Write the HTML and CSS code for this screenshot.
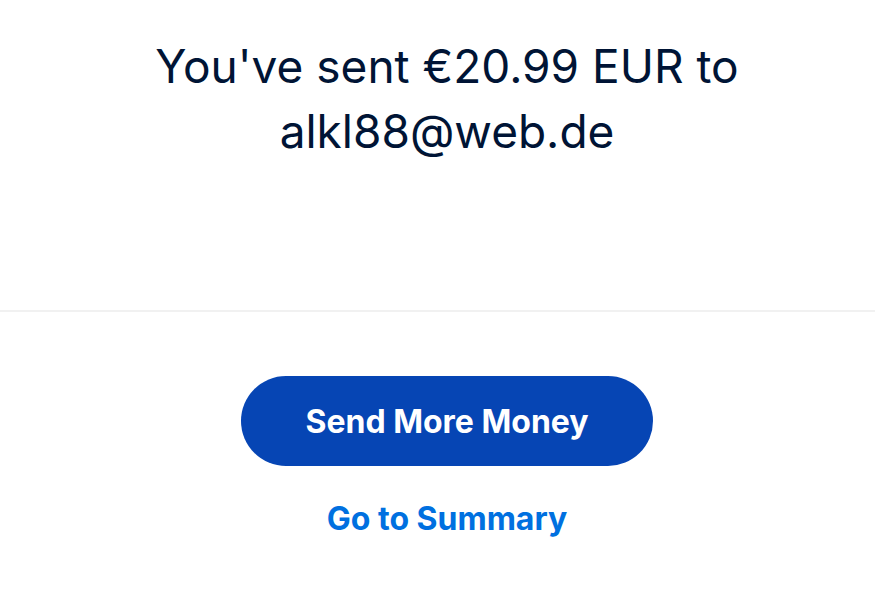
FILE: index.html
```html
<!DOCTYPE html>
<html>
<head>
<meta charset="utf-8">
<link rel="stylesheet" href="styles.css">
</head>
<body>
<main class="page">
  <section class="top">
    <h1 class="title">You've sent €20.99 EUR to alkl88@web.de</h1>
  </section>
  <section class="actions">
    <button class="primary">Send More Money</button>
    <a class="link" href="#">Go to Summary</a>
  </section>
</main>
</body>
</html>
```
FILE: styles.css
```css
html, body {
  margin: 0;
  padding: 0;
  background: #fff;
}
body {
  font-family: Inter, "Noto Sans", sans-serif;
  width: 875px;
  height: 589px;
  overflow: hidden;
}
.page {
  display: flex;
  flex-direction: column;
}
.top {
  height: 312px;
  border-bottom: 2px solid #f1f1f1;
  display: flex;
  justify-content: center;
  padding-top: 34px;
  padding-left: 19px;
  box-sizing: border-box;
}
.title {
  margin: 0;
  width: 640px;
  text-align: center;
  font-size: 46px;
  font-weight: 400;
  line-height: 65px;
  color: #001435;
}
.actions {
  display: flex;
  flex-direction: column;
  align-items: center;
  padding-top: 64px;
  padding-left: 19px;
}
.primary {
  width: 412px;
  height: 90px;
  border: none;
  border-radius: 45px;
  background: #0645b4;
  color: #fff;
  font-family: Inter, "Noto Sans", sans-serif;
  font-size: 32px;
  font-weight: 700;
  cursor: pointer;
}
.link {
  margin-top: 34px;
  color: #0070e0;
  font-size: 32px;
  font-weight: 700;
  text-decoration: none;
  line-height: 38px;
}
```
